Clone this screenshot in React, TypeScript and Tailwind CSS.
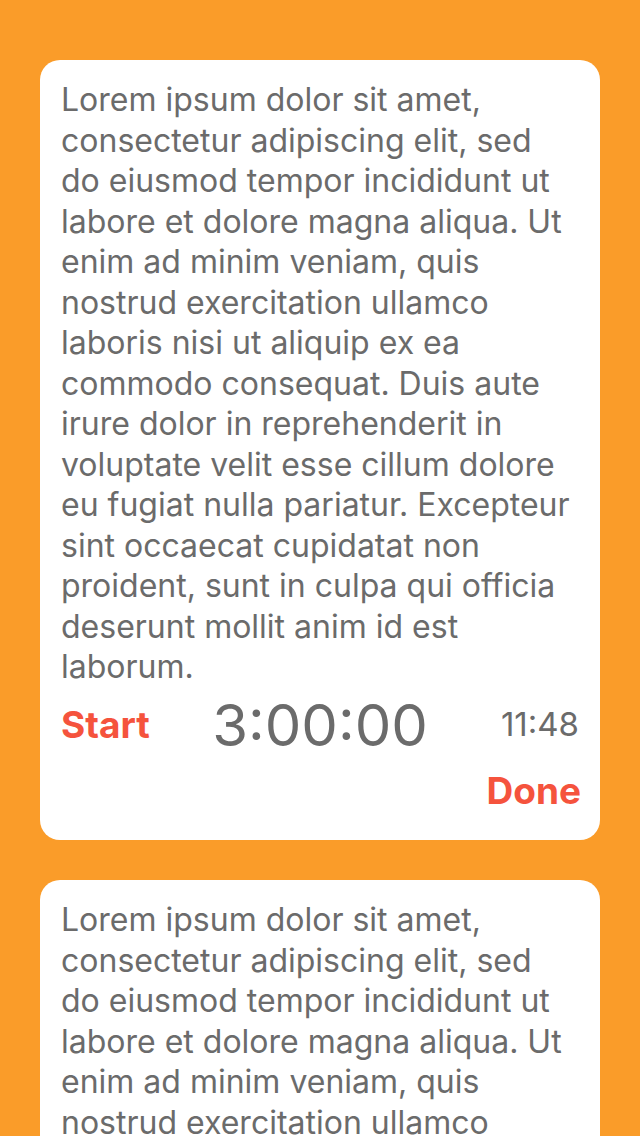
import React from "react";

const LOREM =
  "Lorem ipsum dolor sit amet, consectetur adipiscing elit, sed do eiusmod tempor incididunt ut labore et dolore magna aliqua. Ut enim ad minim veniam, quis nostrud exercitation ullamco laboris nisi ut aliquip ex ea commodo consequat. Duis aute irure dolor in reprehenderit in voluptate velit esse cillum dolore eu fugiat nulla pariatur. Excepteur sint occaecat cupidatat non proident, sunt in culpa qui officia deserunt mollit anim id est laborum.";

const TaskCard = () => {
  return (
    <div className="bg-white rounded-[20px] px-[21px] pt-[20px] pb-[22px]">
      <p className="text-[32px] leading-[40.5px] text-[#6b6b6b]">{LOREM}</p>
      <div className="flex items-center mt-[5px]">
        <div className="flex-1">
          <button className="text-[37px] font-bold text-[#f5533d]">Start</button>
        </div>
        <div className="text-[58px] leading-[64px] text-[#6b6b6b]">3:00:00</div>
        <div className="flex-1 text-right text-[33px] text-[#6b6b6b]">11:48</div>
      </div>
      <div className="flex justify-end mt-[6px] -mr-[2px]">
        <button className="text-[37px] font-bold text-[#f5533d]">Done</button>
      </div>
    </div>
  );
};

export default function App() {
  return (
    <div
      className="min-h-screen bg-[#fa9c29] px-[40px] pt-[60px] pb-[60px] flex flex-col gap-[40px]"
      style={{ fontFamily: "Inter, 'Noto Sans', sans-serif" }}
    >
      <TaskCard />
      <TaskCard />
    </div>
  );
}
